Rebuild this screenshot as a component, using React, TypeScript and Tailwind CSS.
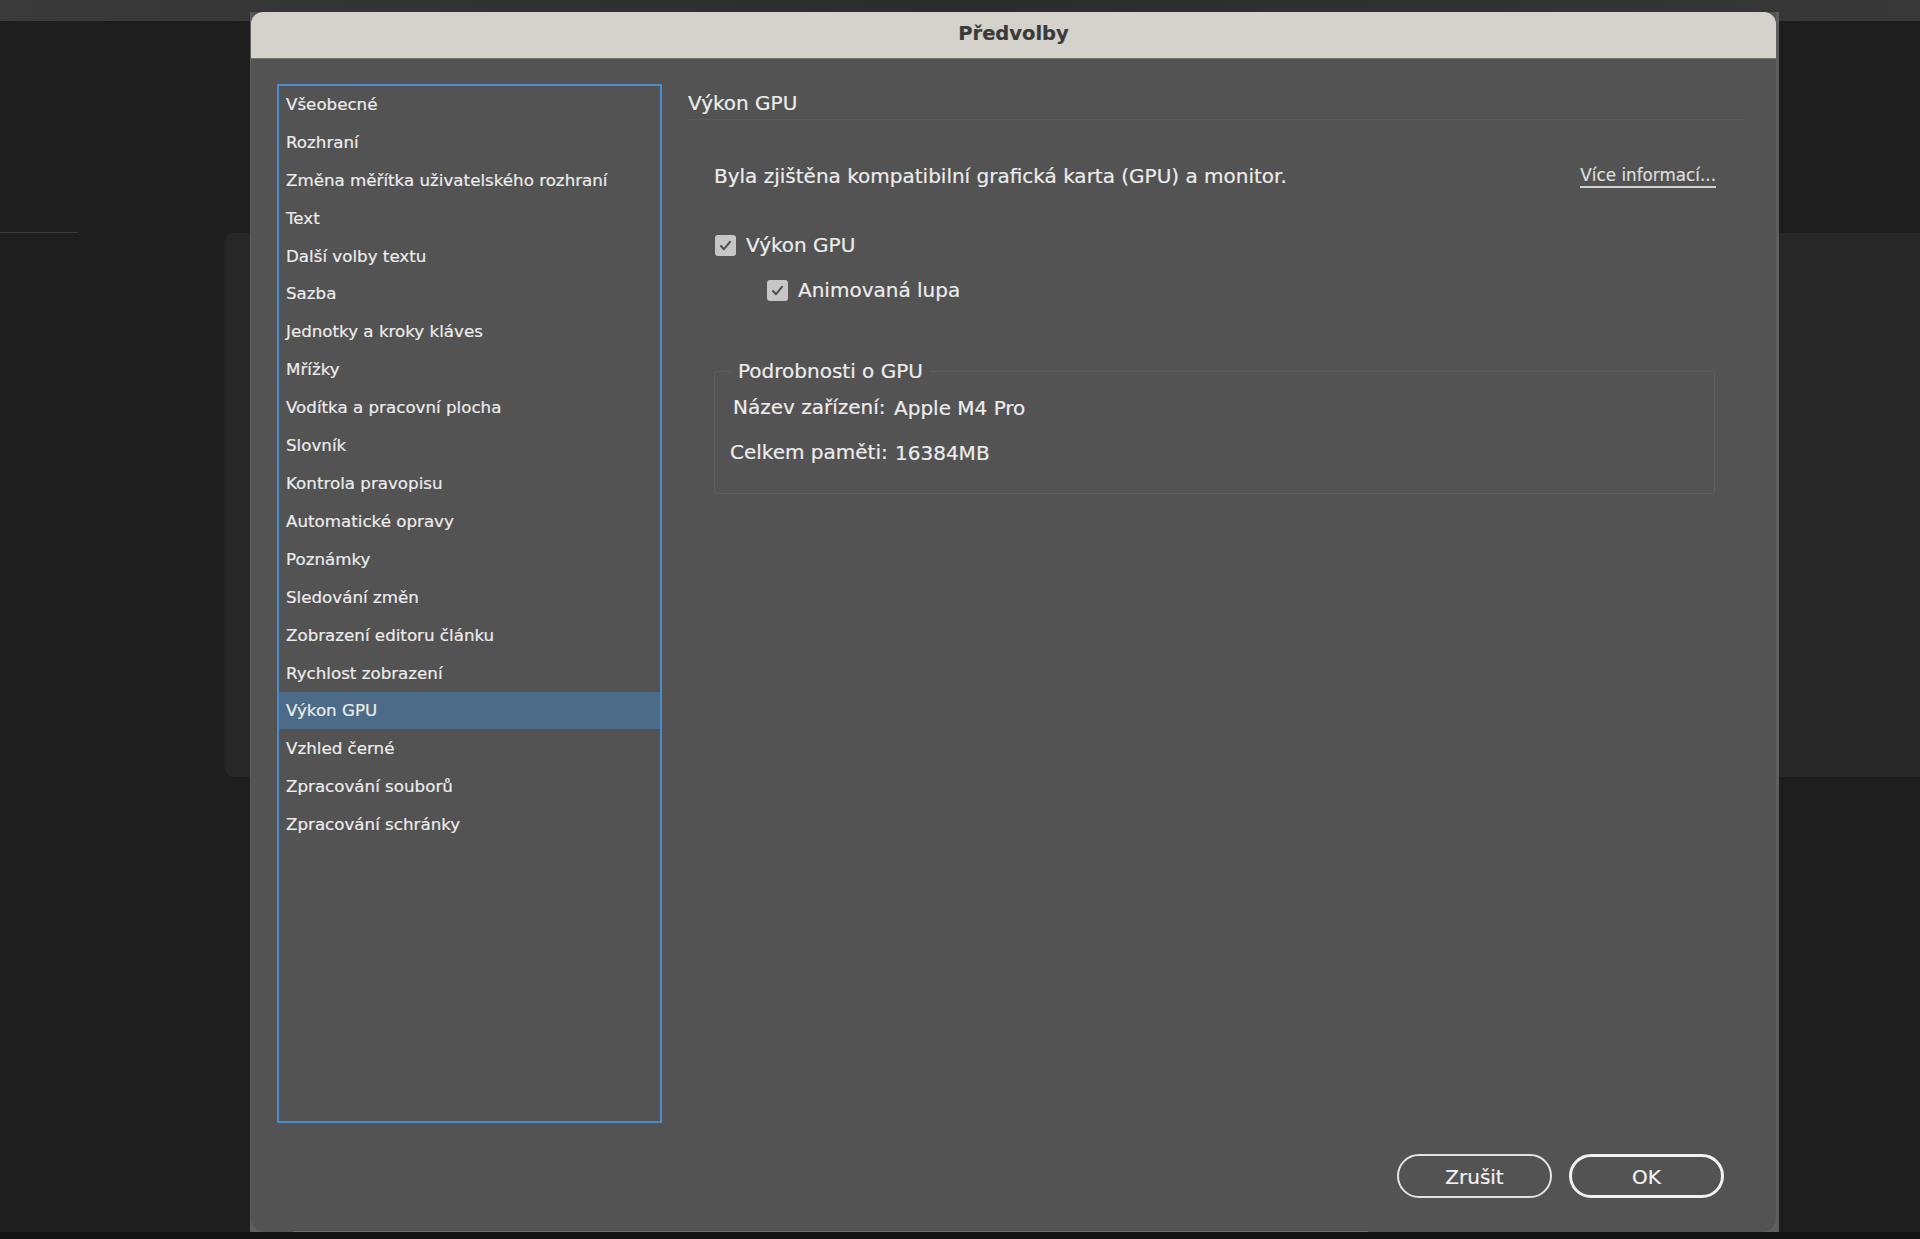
import React from "react";

const items = [
  "Všeobecné","Rozhraní","Změna měřítka uživatelského rozhraní","Text","Další volby textu","Sazba",
  "Jednotky a kroky kláves","Mřížky","Vodítka a pracovní plocha","Slovník","Kontrola pravopisu",
  "Automatické opravy","Poznámky","Sledování změn","Zobrazení editoru článku","Rychlost zobrazení",
  "Výkon GPU","Vzhled černé","Zpracování souborů","Zpracování schránky",
];

function Check() {
  return (
    <span className="flex h-[21px] w-[21px] shrink-0 items-center justify-center rounded-[3px] bg-[#c6c6c6]">
      <svg width="15" height="15" viewBox="0 0 15 15" fill="none">
        <path d="M3 8l3 3.2L12 3.8" stroke="#4f4f4f" strokeWidth="2" strokeLinecap="round" strokeLinejoin="round" />
      </svg>
    </span>
  );
}

export default function App() {
  return (
    <div className="relative h-[1239px] w-[1920px] overflow-hidden bg-[#1e1e1e] font-['DejaVu_Sans','Noto_Sans',sans-serif] text-[#ececec] [-webkit-text-stroke:0.2px]">
      <div className="h-[21px] bg-gradient-to-r from-[#3a3a3a] via-[#2b2b2b] to-[#383838]" />
      <div className="flex h-[212px] items-end">
        <div className="h-[1px] w-[78px] bg-[#3d3d3d]" />
      </div>
      <div className="ml-[225px] h-[544px] rounded-bl-[8px] rounded-tl-[8px] bg-[#272727]" />
      <div className="absolute bottom-0 left-0 h-[7px] w-full bg-[#141414]" />

      <div className="absolute left-[250px] top-[12px] h-[1220px] w-[1529px] overflow-hidden bg-[#5f5f5f]">
        <div className="ml-[1px] mr-[3px] h-full rounded-b-[14px] bg-[#535353]">
          <div className="flex h-[47px] items-center justify-center rounded-t-[12px] border-b border-[#77736e] bg-[#d5d1cb] pb-[2px] text-[19.5px] font-bold text-[#3a3a3a]">
            Předvolby
          </div>
          <div className="flex items-start pl-[26px] pt-[25px]">
            <div className="h-[1039px] w-[385px] shrink-0 border-2 border-[#4c8ccc]">
              <div className="-mt-[1px]">
                {items.map((t, i) => (
                  <div
                    key={t}
                    className={
                      i === 16
                        ? "flex h-[37.92px] items-center bg-[#4c6b88] pl-[7px] pt-[1px] text-[16.7px]"
                        : "flex h-[37.92px] items-center pl-[7px] pt-[1px] text-[16.7px]"
                    }
                  >
                    {t}
                  </div>
                ))}
              </div>
            </div>
            <div className="ml-[26px] flex h-[1114px] w-[1057px] flex-col">
              <div className="flex h-[36px] items-center border-b border-[#5b5b5b] pt-[3px] text-[20px]">Výkon GPU</div>
              <div className="mt-[39px] flex h-[36px] items-center justify-between pb-[2px] pl-[26px] pr-[29px]">
                <span className="text-[20px]">Byla zjištěna kompatibilní grafická karta (GPU) a monitor.</span>
                <span className="mt-[1px] border-b-2 border-[#cfcfcf] text-[16.8px] leading-[21px] text-[#dcdcdc]">Více informací...</span>
              </div>
              <div className="ml-[27px] mt-[38px] flex h-[24px] items-center gap-[10px] text-[20px]">
                <Check />
                <span>Výkon GPU</span>
              </div>
              <div className="ml-[79px] mt-[21px] flex h-[24px] items-center gap-[10px] text-[20px]">
                <Check />
                <span>Animovaná lupa</span>
              </div>
              <div className="relative ml-[26px] mt-[69px] h-[123px] w-[1001px] rounded-[3px] border border-[#5e5e5e] text-[20px]">
                <span className="absolute -top-[15px] left-[16px] bg-[#535353] px-[7px] leading-[28px]">Podrobnosti o GPU</span>
                <div className="ml-[18px] mt-[23px] flex h-[24px] items-center">
                  <span className="w-[161px]">Název zařízení:</span>
                  <span className="mt-[2px]">Apple M4 Pro</span>
                </div>
                <div className="ml-[15px] mt-[21px] flex h-[24px] items-center">
                  <span className="w-[165px]">Celkem paměti:</span>
                  <span className="mt-[2px]">16384MB</span>
                </div>
              </div>
              <div className="mr-[21px] mt-auto flex justify-end gap-[17px]">
                <button className="h-[44px] w-[155px] rounded-[22px] border-2 border-[#e4e4e4] pt-[2px] text-[20px] text-[#f2f2f2]">Zrušit</button>
                <button className="h-[44px] w-[155px] rounded-[22px] border-[3px] border-[#f2f2f2] pt-[2px] text-[20px] text-[#f2f2f2]">OK</button>
              </div>
            </div>
          </div>
        </div>
      </div>
      <div className="absolute left-[293px] top-[1231px] h-[1px] w-[1075px] bg-[#6f6f6f]" />
    </div>
  );
}
